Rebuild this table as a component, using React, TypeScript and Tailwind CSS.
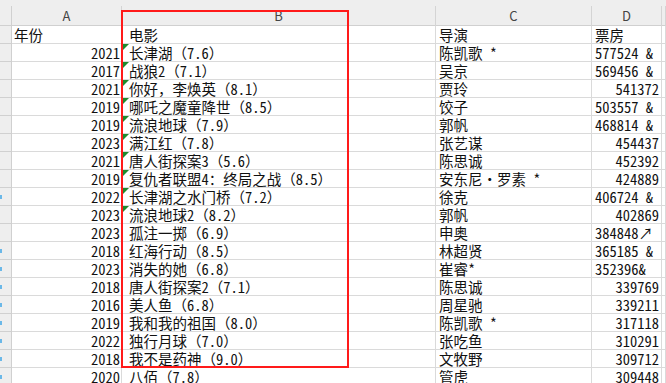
import React from "react";

type Row = {
  year: string;
  film: string;
  director: string;
  box: string;
  boxRight?: boolean;
  mark?: boolean;
};

const rows: Row[] = [
  { year: "2021", film: "长津湖（7.6）", director: "陈凯歌 *", box: "577524 &", mark: true },
  { year: "2017", film: "战狼2（7.1）", director: "吴京", box: "569456 &", mark: true },
  { year: "2021", film: "你好，李焕英（8.1）", director: "贾玲", box: "541372", boxRight: true, mark: true },
  { year: "2019", film: "哪吒之魔童降世（8.5）", director: "饺子", box: "503557 &", mark: true },
  { year: "2019", film: "流浪地球（7.9）", director: "郭帆", box: "468814 &", mark: true },
  { year: "2023", film: "满江红（7.8）", director: "张艺谋", box: "454437", boxRight: true, mark: true },
  { year: "2021", film: "唐人街探案3（5.6）", director: "陈思诚", box: "452392", boxRight: true, mark: true },
  { year: "2019", film: "复仇者联盟4：终局之战（8.5）", director: "安东尼·罗素 *", box: "424889", boxRight: true, mark: true },
  { year: "2022", film: "长津湖之水门桥（7.2）", director: "徐克", box: "406724 &", mark: true },
  { year: "2023", film: "流浪地球2（8.2）", director: "郭帆", box: "402869", boxRight: true, mark: true },
  { year: "2023", film: "孤注一掷（6.9）", director: "申奥", box: "384848↗" },
  { year: "2018", film: "红海行动（8.5）", director: "林超贤", box: "365185 &" },
  { year: "2023", film: "消失的她（6.8）", director: "崔睿*", box: "352396&" },
  { year: "2018", film: "唐人街探案2（7.1）", director: "陈思诚", box: "339769", boxRight: true },
  { year: "2016", film: "美人鱼（6.8）", director: "周星驰", box: "339211", boxRight: true },
  { year: "2019", film: "我和我的祖国（8.0）", director: "陈凯歌 *", box: "317118", boxRight: true },
  { year: "2022", film: "独行月球（7.0）", director: "张吃鱼", box: "310291", boxRight: true },
  { year: "2018", film: "我不是药神（9.0）", director: "文牧野", box: "309712", boxRight: true },
  { year: "2020", film: "八佰（7.8）", director: "管虎", box: "309448", boxRight: true },
];

const cols = "grid grid-cols-[12px_110px_314px_156px_70px_1fr]";
const cell = "h-[18px] border-r border-b border-[#dadada] leading-[17px] whitespace-nowrap overflow-hidden";

// half-width latin runs, like the spreadsheet's SimSun text
function Txt({ s }: { s: string }) {
  const parts = s.split(/([\x20-\x7e]+)/).filter(Boolean);
  return (
    <>
      {parts.map((p, i) =>
        /^[\x20-\x7e]+$/.test(p) ? (
          <span key={i} className="inline-block align-top h-[17px] whitespace-pre [font-feature-settings:'hwid']">
            {p}
          </span>
        ) : (
          <span key={i} className="inline-block align-top h-[17px]">
            {p}
          </span>
        )
      )}
    </>
  );
}

export default function App() {
  return (
    <div className="relative w-[666px] h-[383px] overflow-hidden bg-white text-[14.5px] text-[#111] font-['Noto_Sans_CJK_SC','Noto_Sans',sans-serif]">
      {/* column letters */}
      <div className={`${cols} h-[26px] bg-[#eeeeee] border-b border-[#d0d0d0] pt-[6px]`}>
        <div className="border-r border-[#d0d0d0]" />
        {["A", "B", "C", "D", ""].map((l, i) => (
          <div
            key={i}
            className="border-r border-[#d4d4d4] text-center text-[13px] leading-[20px] text-[#444]"
          >
            {l}
          </div>
        ))}
      </div>

      {/* header row */}
      <div className={cols}>
        <div className="h-[18px] bg-[#eeeeee] border-r border-b border-[#d0d0d0]" />
        <div className={`${cell} pl-[2px]`}>
          <Txt s="年份" />
        </div>
        <div className={`${cell} pl-[7px]`}>
          <Txt s="电影" />
        </div>
        <div className={`${cell} pl-[3px]`}>
          <Txt s="导演" />
        </div>
        <div className={`${cell} pl-[3px]`}>
          <Txt s="票房" />
        </div>
        <div className={cell} />
      </div>

      {rows.map((r, i) => (
        <div key={i} className={cols}>
          <div className="relative h-[18px] bg-[#eeeeee] border-r border-b border-[#d0d0d0]">
            {(i === 8 || i >= 11) && (
              <span className="absolute left-0 top-[7px] w-[2px] h-[4px] bg-[#6bb8e8]" />
            )}
          </div>
          <div className={`${cell} text-right pr-[1px]`}>
            <Txt s={r.year} />
          </div>
          <div className={`${cell} relative pl-[7px]`}>
            {r.mark && (
              <span className="absolute left-[1px] top-0 w-0 h-0 border-t-[6px] border-t-[#1e8a2e] border-r-[6px] border-r-transparent" />
            )}
            <Txt s={r.film} />
          </div>
          <div className={`${cell} pl-[3px]`}>
            <Txt s={r.director} />
          </div>
          <div className={`${cell} ${r.boxRight ? "text-right pr-[2px]" : "pl-[3px]"}`}>
            <Txt s={r.box} />
          </div>
          <div className={cell} />
        </div>
      ))}

      {/* red selection box */}
      <div className="absolute left-[121px] top-[10px] w-[228px] h-[358px] border-2 border-[#ff1a1a] pointer-events-none" />
    </div>
  );
}
